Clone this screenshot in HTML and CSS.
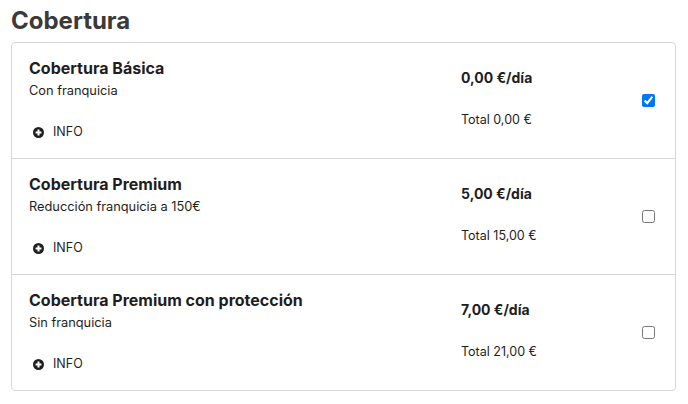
FILE: index.html
```html
<!DOCTYPE html>
<html lang="es">
<head>
<meta charset="utf-8">
<link rel="stylesheet" href="styles.css">
</head>
<body>
<h2 class="title">Cobertura</h2>
<div class="card">
  <div class="row">
    <div class="info">
      <div class="name">Cobertura Básica</div>
      <div class="desc">Con franquicia</div>
      <div class="more"><svg class="plus" viewBox="0 0 12 12" width="11" height="11"><circle cx="6" cy="6" r="6" fill="#1e1e1e"/><path d="M6 2.8v6.4M2.8 6h6.4" stroke="#fff" stroke-width="2.2"/></svg><span>INFO</span></div>
    </div>
    <div class="price">
      <div class="day">0,00 €/día</div>
      <div class="total">Total 0,00 €</div>
    </div>
    <div class="check"><input type="checkbox" checked></div>
  </div>
  <div class="row">
    <div class="info">
      <div class="name">Cobertura Premium</div>
      <div class="desc">Reducción franquicia a 150€</div>
      <div class="more"><svg class="plus" viewBox="0 0 12 12" width="11" height="11"><circle cx="6" cy="6" r="6" fill="#1e1e1e"/><path d="M6 2.8v6.4M2.8 6h6.4" stroke="#fff" stroke-width="2.2"/></svg><span>INFO</span></div>
    </div>
    <div class="price">
      <div class="day">5,00 €/día</div>
      <div class="total">Total 15,00 €</div>
    </div>
    <div class="check"><input type="checkbox"></div>
  </div>
  <div class="row">
    <div class="info">
      <div class="name">Cobertura Premium con protección</div>
      <div class="desc">Sin franquicia</div>
      <div class="more"><svg class="plus" viewBox="0 0 12 12" width="11" height="11"><circle cx="6" cy="6" r="6" fill="#1e1e1e"/><path d="M6 2.8v6.4M2.8 6h6.4" stroke="#fff" stroke-width="2.2"/></svg><span>INFO</span></div>
    </div>
    <div class="price">
      <div class="day">7,00 €/día</div>
      <div class="total">Total 21,00 €</div>
    </div>
    <div class="check"><input type="checkbox"></div>
  </div>
</div>
</body>
</html>
```
FILE: styles.css
```css
* { box-sizing: border-box; }
body {
  margin: 0;
  padding: 0 12px 0 11px;
  font-family: Inter, "Liberation Sans", sans-serif;
  color: #1e1e1e;
  background: #fff;
}
.title {
  margin: 0;
  height: 42px;
  padding-top: 6px;
  font-size: 24px;
  line-height: 30px;
  font-weight: 700;
  color: #3a3a3a;
}
.card {
  border: 1px solid #d8d8d8;
  border-radius: 4px;
}
.row {
  display: flex;
  height: 116px;
  border-top: 1px solid #d8d8d8;
}
.row:first-child { border-top: none; height: 115px; }
.info {
  flex: 1;
  padding: 15px 0 0 17px;
}
.name {
  font-size: 16px;
  font-weight: 700;
  line-height: 20px;
}
.desc {
  margin-top: 5px;
  font-size: 12.8px;
  line-height: 16px;
}
.more {
  margin-top: 25px;
  display: flex;
  align-items: center;
  font-size: 12.5px;
  line-height: 16px;
  padding-left: 4px;
}
.plus { margin-right: 9px; }
.price {
  width: 181px;
  padding-top: 26px;
}
.day {
  font-size: 14px;
  font-weight: 700;
  line-height: 18px;
}
.total {
  margin-top: 25px;
  font-size: 12.5px;
  line-height: 16px;
}
.check {
  width: 33px;
  display: flex;
  align-items: center;
}
.check input {
  margin: 0;
  width: 13px;
  height: 13px;
}
```
